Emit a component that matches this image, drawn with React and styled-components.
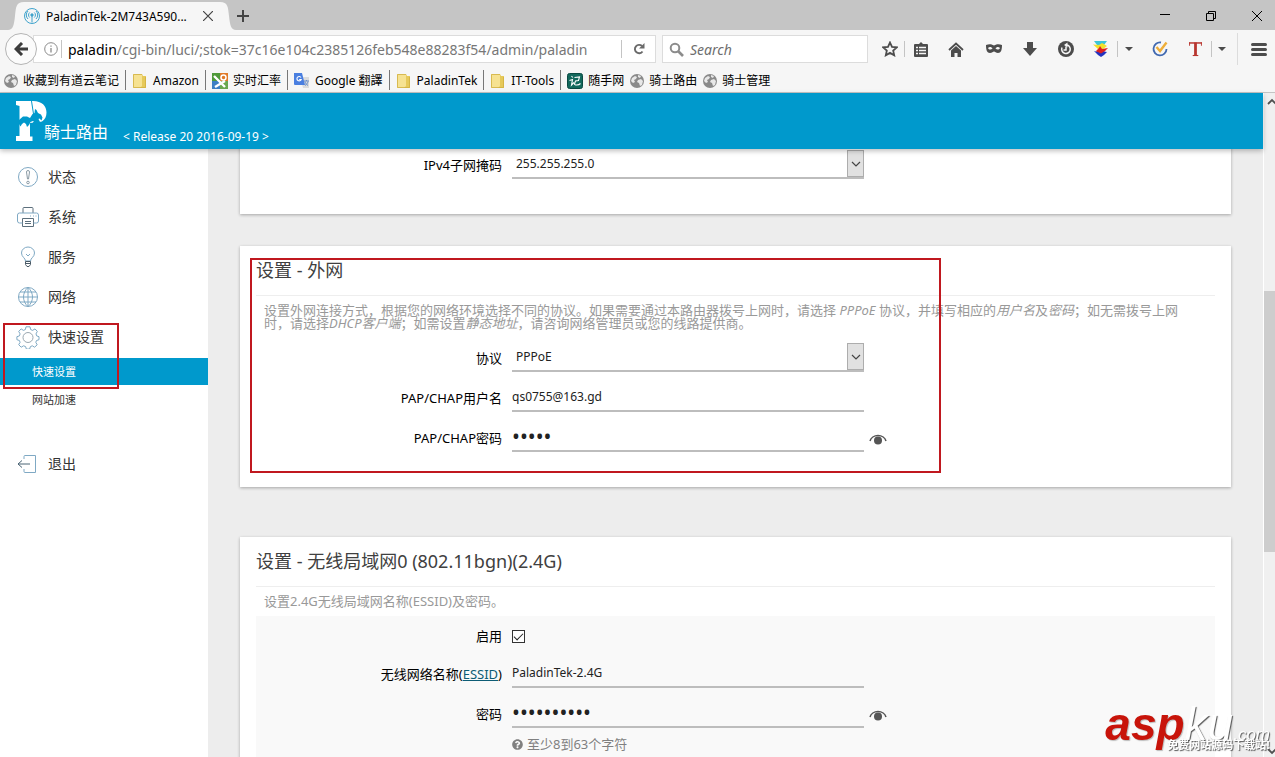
import React, { useState } from 'react';
import styled, { createGlobalStyle } from 'styled-components';
import { FaQuestionCircle } from 'react-icons/fa';

const GlobalStyle = createGlobalStyle`
  :root {
    --accent: #0099cc;
    --page: #ededed;
    --chrome: #f6f6f6;
    --chrome-icon: #4c4c4c;
    --line: #bdbdbd;
    --mark: #c0181f;
  }

  * {
    box-sizing: border-box;
  }

  body {
    margin: 0;
    font-family: 'Noto Sans', 'Noto Sans CJK SC', sans-serif;
    font-size: 13px;
    color: #000;
    background: var(--page);
  }

  button, input, select {
    font: inherit;
    color: inherit;
    margin: 0;
    padding: 0;
    border: 0;
    background: none;
  }
`;

/* ---------- browser ---------- */

const Window = styled.div`
  display: flex;
  flex-direction: column;
  height: 100vh;
  min-width: 900px;
  overflow: hidden;
`;

const TabStrip = styled.div`
  display: flex;
  align-items: flex-end;
  height: 30px;
  padding: 0 4px 0 8px;
  background: #c5c5c5;
`;

const Tab = styled.div`
  display: flex;
  align-items: stretch;
  height: 28px;
`;

const TabEdge = styled.svg`
  display: block;
  width: 16px;
  height: 28px;
  fill: var(--chrome);
`;

const TabBody = styled.div`
  display: flex;
  align-items: center;
  width: 196px;
  background: var(--chrome);
`;

const TabTitle = styled.span`
  flex: 1;
  margin-left: 6px;
  font-size: 12px;
  white-space: nowrap;
`;

const PlainButton = styled.button`
  display: flex;
  align-items: center;
  justify-content: center;
  width: ${(props) => props.$width || 16}px;
  height: ${(props) => props.$height || 28}px;
  color: ${(props) => props.$color || 'var(--chrome-icon)'};

  svg {
    display: block;
    flex: none;
  }
`;

const WindowButtons = styled.div`
  display: flex;
  align-items: center;
  height: 28px;
  gap: 18px;
  margin-left: auto;
`;

const NavBar = styled.div`
  display: flex;
  align-items: center;
  height: 38px;
  padding-left: 5px;
  background: var(--chrome);
`;

const BackButton = styled.button`
  display: flex;
  align-items: center;
  justify-content: center;
  width: 32px;
  height: 32px;
  border: 1px solid #b4b4b4;
  border-radius: 50%;
  background: #fbfbfb;
  z-index: 1;
`;

const UrlBar = styled.div`
  display: flex;
  align-items: center;
  flex: 1;
  min-width: 0;
  height: 28px;
  margin-left: -4px;
  padding-left: 6px;
  border: 1px solid #dcdcdc;
  background: #fff;
  font-size: 14px;
`;

const Divider = styled.span`
  flex: none;
  width: 1px;
  height: ${(props) => props.$height || 18}px;
  margin: 0 ${(props) => props.$space || 0}px;
  background: ${(props) => props.$color || '#c4c4c4'};
`;

const UrlHost = styled.label`
  margin-left: 6px;
`;

const UrlInput = styled.input`
  flex: 1;
  min-width: 0;
  height: 26px;
  margin-right: 26px;
  color: #777;
  outline: none;
`;

const SearchBar = styled.label`
  display: flex;
  align-items: center;
  width: 206px;
  height: 28px;
  margin: 0 7px 0 6px;
  padding-left: 6px;
  gap: 6px;
  border: 1px solid #dcdcdc;
  background: #fff;
`;

const SearchInput = styled.input`
  flex: 1;
  min-width: 0;
  height: 26px;
  font-size: 14px;
  font-style: italic;
  outline: none;

  &::placeholder {
    color: #6e6e6e;
  }
`;

const ToolIcons = styled.div`
  display: flex;
  align-items: center;
`;

const Bookmarks = styled.nav`
  display: flex;
  align-items: center;
  height: 25px;
  padding: 0 4px;
  gap: 6px;
  border-bottom: 1px solid #c4c4c4;
  background: var(--chrome);
`;

const Bookmark = styled.a`
  display: flex;
  align-items: center;
  gap: 5px;
  color: #000;
  font-size: 12px;
  line-height: 20px;
  padding-top: 1px;
  white-space: nowrap;
  text-decoration: none;

  svg {
    display: block;
  }
`;

const Viewport = styled.div`
  display: flex;
  flex: 1;
  min-height: 0;
`;

const ScrollBar = styled.div`
  display: flex;
  flex-direction: column;
  align-items: flex-end;
  width: 12px;
  border-left: 1px solid #fff;
  background: #f0f0f0;
  overflow: hidden;

  svg {
    flex: none;
  }
`;

const ScrollTrack = styled.div`
  flex: 1;
  width: 100%;
  padding-top: 181px;
`;

const ScrollThumb = styled.div`
  height: 261px;
  background: #cdcdcd;
`;

/* ---------- router page ---------- */

const Page = styled.div`
  display: flex;
  flex-direction: column;
  flex: 1;
  min-width: 0;
  background: var(--page);
`;

const Header = styled.header`
  display: flex;
  align-items: flex-end;
  flex: none;
  height: 56px;
  padding: 0 16px 5px;
  background: var(--accent);
  color: #fff;
  box-shadow: 0 2px 5px rgba(0, 0, 0, 0.26);
  z-index: 2;
`;

const Brand = styled.a`
  display: flex;
  align-items: flex-end;
  color: #fff;
  font-size: 16px;
  line-height: 24px;
  text-decoration: none;

  svg {
    margin-bottom: 2px;
  }

  span {
    margin-left: -4px;
  }
`;

const Release = styled.span`
  margin-left: 15px;
  font-size: 12px;
  line-height: 14px;
`;

const Columns = styled.div`
  display: flex;
  flex: 1;
  min-height: 0;
`;

const Sidebar = styled.nav`
  position: relative;
  flex: none;
  width: 208px;
  padding-top: 8px;
  background: #fff;
`;

const MenuItem = styled.a`
  display: flex;
  align-items: center;
  height: 40px;
  padding-left: 16px;
  gap: 8px;
  color: #333;
  font-size: 14px;
  text-decoration: none;

  span {
    padding-bottom: 3px;
  }
`;

const SubMenu = styled.div`
  display: flex;
  flex-direction: column;
  gap: 1px;
  padding: 1px 0 31px;
`;

const SubItem = styled.a`
  padding-left: 32px;
  font-size: 11px;
  line-height: 27px;
  text-decoration: none;
  color: ${(props) => (props.$active ? '#fff' : '#333')};
  background: ${(props) => (props.$active ? 'var(--accent)' : 'none')};
`;

const Main = styled.main`
  flex: 1;
  min-width: 0;
  padding: 0 32px;
  overflow: hidden;
`;

const Card = styled.section`
  position: relative;
  margin-top: ${(props) => props.$gap}px;
  padding: 0 16px 29px;
  background: #fff;
  box-shadow: 0 1px 3px rgba(0, 0, 0, 0.3);
`;

const CardTitle = styled.h3`
  margin: 0;
  border-bottom: 1px solid #eee;
  font-size: 18px;
  font-weight: 400;
  line-height: 49px;
  color: #404040;
`;

const Description = styled.p`
  margin: 0;
  padding: 8px 24px 8px 8px;
  color: #999;
  line-height: 13px;
`;

const Panel = styled.div`
  background: #f9f9f9;
`;

const Row = styled.div`
  display: flex;
  min-height: ${(props) => props.$height || 40}px;
  padding-top: 4px;
`;

const RowLabel = styled.label`
  width: 246px;
  margin-right: 10px;
  text-align: right;
  line-height: 32px;

  a {
    color: #0d5c75;
  }
`;

const Field = styled.div`
  position: relative;
  display: flex;
  flex: 0 1 352px;
  height: 30px;
  border-bottom: 2px solid var(--line);
`;

const TextInput = styled.input`
  width: 100%;
  height: 28px;
  font-size: 12px;
  color: #222;
  outline: none;

  &[type='password'] {
    font-size: 21px;
  }
`;

const Select = styled.select`
  appearance: none;
  width: 100%;
  height: 28px;
  padding: 0 20px 0 4px;
  font-size: 12px;
  color: #222;
  outline: none;
`;

const SelectArrow = styled.span`
  position: absolute;
  top: 1px;
  right: 0;
  display: flex;
  align-items: center;
  justify-content: center;
  width: 17px;
  height: 27px;
  border: 1px solid #adadad;
  background: #e1e1e1;
  pointer-events: none;
`;

const CheckBox = styled.input`
  appearance: none;
  width: 13px;
  height: 13px;
  margin-top: 10px;
  border: 1px solid #333;
  background: #fff;

  &:checked::after {
    content: '';
    display: block;
    width: 8px;
    height: 4px;
    margin: 2px 1px;
    border: solid #222;
    border-width: 0 0 1px 1px;
    transform: rotate(-45deg);
  }
`;

const Hint = styled.p`
  display: flex;
  align-items: center;
  gap: 4px;
  margin: 0;
  padding: 0 0 40px 256px;
  color: #808080;
  line-height: 20px;
`;

/* ---------- overlays ---------- */

const Marker = styled.div`
  position: absolute;
  top: ${(props) => props.$top}px;
  left: ${(props) => props.$left}px;
  width: ${(props) => props.$width}px;
  height: ${(props) => props.$height}px;
  border: 2px solid var(--mark);
  pointer-events: none;
`;

const Watermark = styled.div`
  position: fixed;
  right: 5px;
  bottom: 5px;
  z-index: 3;
  display: flex;
  flex-direction: column;
  align-items: flex-end;
  color: #fff;
  font-family: 'Liberation Sans', 'Noto Sans CJK SC', sans-serif;
  text-shadow: 1px 1px 1px #555;
`;

const WatermarkName = styled.div`
  font-size: 46px;
  font-style: italic;
  line-height: 6px;

  b {
    color: #c8140a;
    text-shadow: 1px 1px 1px #bbb;
  }

  small {
    font-size: 17px;
  }
`;

const WatermarkLine = styled.div`
  font-size: 11px;
  font-weight: 700;
  line-height: 14px;
`;

/* ---------- drawings ---------- */

const Globe = () => (
  <svg width="14" height="14" viewBox="0 0 14 14">
    <circle cx="7" cy="7" r="7" fill="#8a8a8a" />
    <path d="M2 4l3-2 2 1-1 2-2 1 1 2-2 1-2-2zM8 6l3-1 2 2-1 4-2 1-1-3-2-1zM8 1l3 1-1 2-2-1z" fill="#e8e8e8" />
  </svg>
);

const Folder = () => (
  <svg width="16" height="16" viewBox="0 0 16 16">
    <path d="M1 1h9l1 2h3v12H1z" fill="#e6c95a" />
    <path d="M1 1h9v12l-2 2H1z" fill="#f6e292" />
    <path d="M1.500 1.500h8.500M1.500 1.500v13h12V4" fill="none" stroke="#d0b040" strokeWidth="0.800" />
  </svg>
);

const RateIcon = () => (
  <svg width="16" height="16" viewBox="0 0 16 16">
    <path d="M0 0h8v8H0z" fill="#4f9a3a" />
    <path d="M8 0h8v8H8z" fill="#e07a2a" />
    <path d="M0 8h8v8H0z" fill="#3d7fc4" />
    <path d="M8 8h8v8H8z" fill="#6aa84f" />
    <path d="M2 3l11 11M13 8L3 14" stroke="#fff" strokeWidth="2.400" />
    <circle cx="11.500" cy="4.500" r="2.500" fill="none" stroke="#fff" strokeWidth="1.500" />
  </svg>
);

const TranslateIcon = () => (
  <svg width="16" height="16" viewBox="0 0 16 16">
    <path d="M6 4h9v11H9z" fill="#dcdcdc" />
    <path d="M0 0h8l3 12H1a1 1 0 0 1-1-1z" fill="#4a7fe0" />
    <path d="M7 4.500A2.200 2.200 0 1 0 7.200 6.500H5.200" fill="none" stroke="#fff" strokeWidth="1.100" />
    <path d="M10 8h5M12.500 7v1M11 8.500c.500 2 1.500 3 3 4M14 8.500c-.500 2-1.500 3-3 4" fill="none" stroke="#6b8fc9" />
  </svg>
);

const NoteIcon = () => (
  <svg width="16" height="16" viewBox="0 0 16 16">
    <rect x="0.500" y="0.500" width="15" height="15" rx="2" fill="#12685c" stroke="#0a4a42" />
    <path d="M4.500 3l1.200 1.500M2.500 7.500l3-1-1 5.500 2.500-2.500M7.500 4.500l5-.500-1 3.500-3 .500L7.500 11c0 1.500 4 1.500 6-.500" fill="none" stroke="#fff" strokeWidth="1.100" />
  </svg>
);

const TabIcon = () => (
  <svg width="16" height="16" viewBox="0 0 16 16" fill="none" stroke="#3fa3cc">
    <circle cx="8" cy="8" r="7.500" />
    <circle cx="8" cy="7" r="1.200" fill="#3fa3cc" />
    <path d="M8 8v6.500M5.700 9.500a3.300 3.300 0 0 1 0-5M10.300 9.500a3.300 3.300 0 0 0 0-5M4 11a5.500 5.500 0 0 1 0-8M12 11a5.500 5.500 0 0 0 0-8" />
  </svg>
);

const Caret = () => (
  <svg width="8" height="4" viewBox="0 0 8 4">
    <path d="M0 0h8L4 4z" fill="currentColor" />
  </svg>
);

const Chevron = () => (
  <svg width="10" height="6" viewBox="0 0 10 6" fill="none" stroke="#444" strokeWidth="1.200">
    <path d="M1 1l4 4 4-4" />
  </svg>
);

const Eye = () => (
  <svg width="18" height="12" viewBox="0 0 18 12">
    <path d="M1 8a8.200 7 0 0 1 16 0" fill="none" stroke="#555" strokeWidth="1.500" />
    <circle cx="9" cy="7.500" r="4" fill="#555" />
  </svg>
);

const Logo = () => (
  <svg width="32" height="42" viewBox="0 0 32 42">
    <path d="M0 1h17c9 0 13.500 5 13.500 11.500 0 4-1.500 7-4.500 9l-3 .500-9 1v13.500h2.500v4.500H0V36h3.500V6L0 5z" fill="#fff" />
    <path d="M15 1h1l2 13h-1z" fill="#0099cc" />
    <path d="M3 20l4-3.500h4l3 1.500 2.500-4 2-1 .500-4 1.500 1 1.500 3 3 1.500 1.500 3-1 3-2-2-1 .500 1.500 3-3 1-4-2-2.500 1-1.500 3-2 2-1-3-2-1.500-2 1.500-1.500 2.500L3 24z" fill="#0099cc" />
    <path d="M16 24l2-3 3-1 2 3-4 1-3 4z" fill="#0099cc" />
  </svg>
);

const MENU_DRAWINGS = {
  status: (
    <>
      <circle cx="12" cy="12" r="9.500" />
      <path d="M10.500 7a1.500 1.500 0 0 1 3 0l-1 7h-1z" stroke="#8a9aa5" />
      <circle cx="12" cy="17.500" r="1.300" stroke="#8a9aa5" />
    </>
  ),
  system: (
    <>
      <path d="M7 8V3.500a1 1 0 0 1 1-1h8a1 1 0 0 1 1 1V8M6.500 13.500h11v8h-11zM9 16.500h6M9 18.500h6" stroke="#5c6f7c" />
      <path d="M6.500 18H3.500a2 2 0 0 1-2-2v-6a2 2 0 0 1 2-2h17a2 2 0 0 1 2 2v6a2 2 0 0 1-2 2h-3M14 11h1M17 11h1M19.500 11h1" />
    </>
  ),
  services: (
    <>
      <path d="M9.500 16c0-3-4-4-4-8a6.500 6 0 0 1 13 0c0 4-4 5-4 8zM10 9l2 2 2-2" />
      <path d="M9.500 16.500h5v3l-1.500 2h-2l-1.500-2zM9.500 18.500h5" stroke="#4a5a66" />
    </>
  ),
  network: (
    <>
      <circle cx="12" cy="12" r="9.500" />
      <path d="M2.500 12h19M12 2.500v19M4 7h16M4 17h16M12 2.500c-6 5-6 14 0 19M12 2.500c6 5 6 14 0 19" />
    </>
  ),
  quick: (
    <>
      <path d="M10 1.800h4l.600 2.700 2 .900 2.400-1.500 2.300 2.500-1.300 2.500.700 2 2.300.800v3l-2.500.800-.700 1.800 1.400 2.500-2.600 2.400-2.300-1.400-1.900.800-.800 2.500h-3.200l-.800-2.500-2-.800-2.400 1.400-2.500-2.500 1.400-2.400-.700-1.800-2.500-.800v-3l2.500-.800.700-2-1.400-2.500 2.500-2.500L7.400 5.400l2-.900z" />
      <circle cx="12" cy="12.500" r="5" stroke="#9aa7b0" />
    </>
  ),
  logout: (
    <>
      <path d="M8 7V4.500a1 1 0 0 1 1-1h10.500v17H9a1 1 0 0 1-1-1V17" />
      <path d="M2 12h12M6 8.500L2 12l4 3.500" stroke="#4a6475" />
    </>
  ),
};

const MenuIcon = ({ name }) => (
  <svg width="24" height="24" viewBox="0 0 24 24" fill="none" stroke="#7fa9c4">
    {MENU_DRAWINGS[name]}
  </svg>
);

/* ---------- parts ---------- */

const MENU = [
  { id: 'status', label: '状态' },
  { id: 'system', label: '系统' },
  { id: 'services', label: '服务' },
  { id: 'network', label: '网络' },
  { id: 'quick', label: '快速设置' },
];

const SUB_MENU = ['快速设置', '网站加速'];

const BOOKMARKS = [
  { label: '收藏到有道云笔记', icon: <Globe />, divider: true },
  { label: 'Amazon', icon: <Folder />, divider: true },
  { label: '实时汇率', icon: <RateIcon />, divider: true },
  { label: 'Google 翻譯', icon: <TranslateIcon />, divider: true },
  { label: 'PaladinTek', icon: <Folder />, divider: true },
  { label: 'IT-Tools', icon: <Folder />, divider: true },
  { label: '随手网', icon: <NoteIcon /> },
  { label: '骑士路由', icon: <Globe /> },
  { label: '骑士管理', icon: <Globe /> },
];

const SelectRow = ({ id, label, options }) => (
  <Row>
    <RowLabel htmlFor={id}>{label}</RowLabel>
    <Field>
      <Select id={id}>
        {options.map((option) => (
          <option key={option}>{option}</option>
        ))}
      </Select>
      <SelectArrow>
        <Chevron />
      </SelectArrow>
    </Field>
  </Row>
);

const TextRow = ({ id, label, value }) => (
  <Row>
    <RowLabel htmlFor={id}>{label}</RowLabel>
    <Field>
      <TextInput id={id} type="text" defaultValue={value} />
    </Field>
  </Row>
);

const PasswordRow = ({ id, label, value }) => {
  const [visible, setVisible] = useState(false);

  return (
    <Row>
      <RowLabel htmlFor={id}>{label}</RowLabel>
      <Field>
        <TextInput id={id} type={visible ? 'text' : 'password'} defaultValue={value} />
      </Field>
      <PlainButton
        type="button"
        aria-label="显示密码"
        $width={28}
        $height={34}
        onClick={() => setVisible(!visible)}
      >
        <Eye />
      </PlainButton>
    </Row>
  );
};

const BrowserChrome = () => (
  <>
    <TabStrip>
      <Tab>
        <TabEdge viewBox="0 0 16 28">
          <path d="M16 0C8 0 8 5 7 14S5 28 0 28h16z" />
        </TabEdge>
        <TabBody>
          <TabIcon />
          <TabTitle>PaladinTek-2M743A590...</TabTitle>
          <PlainButton aria-label="Close tab" $width={24}>
            <svg width="10" height="10" viewBox="0 0 10 10" stroke="#444" strokeWidth="1.200">
              <path d="M0 0l10 10M10 0L0 10" />
            </svg>
          </PlainButton>
        </TabBody>
        <TabEdge viewBox="0 0 16 28">
          <path d="M0 0c8 0 8 5 9 14s2 14 7 14H0z" />
        </TabEdge>
      </Tab>
      <PlainButton aria-label="New tab" $width={14}>
        <svg width="12" height="12" viewBox="0 0 12 12" stroke="#444" strokeWidth="2">
          <path d="M6 0v12M0 6h12" />
        </svg>
      </PlainButton>
      <WindowButtons>
        <PlainButton aria-label="Minimize" $width={28}>
          <svg width="10" height="10" viewBox="0 0 10 10" stroke="#000">
            <path d="M0 3.500h10" />
          </svg>
        </PlainButton>
        <PlainButton aria-label="Restore" $width={28}>
          <svg width="10" height="10" viewBox="0 0 10 10" fill="none" stroke="#000">
            <path d="M.500 2.500h7v7h-7zM2.500 2.500v-2h7v7h-2" />
          </svg>
        </PlainButton>
        <PlainButton aria-label="Close" $width={28}>
          <svg width="10" height="10" viewBox="0 0 10 10" stroke="#000">
            <path d="M0 0l10 10M10 0L0 10" />
          </svg>
        </PlainButton>
      </WindowButtons>
    </TabStrip>

    <NavBar>
      <BackButton aria-label="Back">
        <svg width="14" height="14" viewBox="0 0 14 14" fill="none" stroke="#3c3c3c" strokeWidth="3">
          <path d="M8 1L2 7l6 6M2.500 7H14" />
        </svg>
      </BackButton>
      <UrlBar>
        <PlainButton aria-label="Site information" $width={21} $color="#8a8a8a">
          <svg width="14" height="14" viewBox="0 0 14 14" fill="none" stroke="currentColor">
            <circle cx="7" cy="7" r="6.300" />
            <path d="M7 6v4.500M7 3.500v1.300" strokeWidth="1.300" />
          </svg>
        </PlainButton>
        <Divider $height={18} />
        <UrlHost htmlFor="url">paladin</UrlHost>
        <UrlInput id="url" type="text" defaultValue="/cgi-bin/luci/;stok=37c16e104c2385126feb548e88283f54/admin/paladin" />
        <Divider $height={18} />
        <PlainButton aria-label="Reload" $width={33} $color="#6a6a6a">
          <svg width="12" height="12" viewBox="0 0 12 12">
            <path d="M9.500 8.500A4.200 4.200 0 1 1 9 3" fill="none" stroke="currentColor" strokeWidth="1.900" />
            <path d="M11.500 0v5.500H6z" fill="currentColor" />
          </svg>
        </PlainButton>
      </UrlBar>
      <SearchBar>
        <svg width="15" height="15" viewBox="0 0 15 15" fill="none" stroke="#8c8c8c" strokeWidth="2">
          <circle cx="6" cy="6" r="4.300" />
          <path d="M9 9l5 5" strokeWidth="2.600" />
        </svg>
        <SearchInput type="text" placeholder="Search" aria-label="Search" />
      </SearchBar>
      <ToolIcons>
        <PlainButton aria-label="Bookmark this page" $width={29}>
          <svg width="16" height="16" viewBox="0 0 16 16" fill="none" stroke="currentColor" strokeWidth="1.800">
            <path d="M8 1.500l2 4.400 4.800.500-3.600 3.200 1 4.700L8 11.900l-4.200 2.400 1-4.700L1.200 6.400l4.800-.500z" />
          </svg>
        </PlainButton>
        <Divider $height={16} />
        <PlainButton aria-label="Bookmarks" $width={31}>
          <svg width="14" height="15" viewBox="0 0 14 15">
            <path d="M1 2h4l2-2 2 2h4a1 1 0 0 1 1 1v11a1 1 0 0 1-1 1H1a1 1 0 0 1-1-1V3a1 1 0 0 1 1-1z" fill="currentColor" />
            <path d="M2 5.500h2M5 5.500h7M2 8.500h2M5 8.500h7M2 11.500h2M5 11.500h7" stroke="#f6f6f6" strokeWidth="1.600" />
          </svg>
        </PlainButton>
        <PlainButton aria-label="Home" $width={40}>
          <svg width="16" height="15" viewBox="0 0 16 15">
            <path d="M1 8l7-6.500L15 8" fill="none" stroke="currentColor" strokeWidth="1.800" />
            <path d="M3 8.500L8 4l5 4.500V15H9.500v-4h-3v4H3z" fill="currentColor" />
          </svg>
        </PlainButton>
        <PlainButton aria-label="Private browsing" $width={36}>
          <svg width="16" height="10" viewBox="0 0 16 10">
            <path d="M0 1c3-1 5-1 8 .500C11 0 13 0 16 1c0 5-1 8-4 8-2 0-3-1.500-4-1.500S6 9 4 9C1 9 0 6 0 1z" fill="currentColor" />
            <path d="M2 4c1.500-1.500 3.500-1 4.500.500C5 6 3 6 2 4zM14 4c-1.500-1.500-3.500-1-4.500.500C11 6 13 6 14 4z" fill="#f6f6f6" />
          </svg>
        </PlainButton>
        <PlainButton aria-label="Downloads" $width={36}>
          <svg width="14" height="14" viewBox="0 0 14 14" fill="currentColor">
            <path d="M4 0h6v6h4l-7 8-7-8h4z" />
          </svg>
        </PlainButton>
        <PlainButton aria-label="History" $width={36}>
          <svg width="16" height="16" viewBox="0 0 16 16">
            <circle cx="8" cy="8" r="8" fill="currentColor" />
            <path d="M4 6.500a4.300 4.300 0 1 0 5-2.500M8 5.500V9H5.500" fill="none" stroke="#f6f6f6" strokeWidth="1.500" />
            <path d="M9.500 1.500v5L6 4z" fill="#f6f6f6" />
          </svg>
        </PlainButton>
        <PlainButton aria-label="Proxy" $width={33}>
          <svg width="16" height="16" viewBox="0 0 16 16">
            <path d="M1 0h13l-3 4H4z" fill="#3cc5d8" />
            <path d="M0 3.500l6 .500 3-2 5 3-4 3H5z" fill="#f2e12a" />
            <path d="M3 10l3-3 1-2 2 3 6-1-3 3-3 3H5z" fill="#e02020" />
            <path d="M1 10l4 1 3 1.500 3-2 3 .500-3 3-3 2-3-2z" fill="#2432c0" />
          </svg>
        </PlainButton>
        <Divider $height={16} />
        <PlainButton aria-label="Proxy options" $width={22}>
          <Caret />
        </PlainButton>
        <PlainButton aria-label="Tasks" $width={40}>
          <svg width="16" height="16" viewBox="0 0 16 16" fill="none">
            <path d="M9 1.500A6.500 6.500 0 1 0 14.500 8" stroke="#4169b0" strokeWidth="1.800" />
            <path d="M4.500 6l3.500 4 6.500-8.500" stroke="#eeae3a" strokeWidth="2.400" />
          </svg>
        </PlainButton>
        <PlainButton aria-label="Text tool" $width={31}>
          <svg width="13" height="16" viewBox="0 0 14 16" fill="none" stroke="#b8352f">
            <path d="M0 1.500h14" strokeWidth="1.600" />
            <path d="M.600 1v3.500M13.400 1v3.500" strokeWidth="1" />
            <path d="M7 1v14" strokeWidth="3" />
            <path d="M4 15h6" strokeWidth="1.200" />
          </svg>
        </PlainButton>
        <Divider $height={16} />
        <PlainButton aria-label="Text tool options" $width={20}>
          <Caret />
        </PlainButton>
        <Divider $height={32} $space={5} $color="#dcdcdc" />
        <PlainButton aria-label="Menu" $width={32}>
          <svg width="16" height="13" viewBox="0 0 16 13" stroke="currentColor" strokeWidth="3" strokeLinecap="round">
            <path d="M1.500 1.500h13M1.500 6.500h13M1.500 11.500h13" />
          </svg>
        </PlainButton>
      </ToolIcons>
    </NavBar>

    <Bookmarks>
      {BOOKMARKS.map(({ label, icon, divider }) => (
        <React.Fragment key={label}>
          <Bookmark href="#">
            {icon}
            {label}
          </Bookmark>
          {divider && <Divider $height={20} $color="#777" />}
        </React.Fragment>
      ))}
    </Bookmarks>
  </>
);

const SideMenu = () => (
  <Sidebar>
    {MENU.map(({ id, label }) => (
      <MenuItem key={id} href={`#${id}`}>
        <MenuIcon name={id} />
        <span>{label}</span>
      </MenuItem>
    ))}
    <SubMenu>
      {SUB_MENU.map((label, index) => (
        <SubItem key={label} href="#quick" $active={index === 0}>
          {label}
        </SubItem>
      ))}
    </SubMenu>
    <MenuItem href="#logout">
      <MenuIcon name="logout" />
      <span>退出</span>
    </MenuItem>
    <Marker $top={174} $left={3} $width={116} $height={66} />
  </Sidebar>
);

const App = () => (
  <Window>
    <GlobalStyle />
    <BrowserChrome />
    <Viewport>
      <Page>
        <Header>
          <Brand href="#">
            <Logo />
            <span>騎士路由</span>
          </Brand>
          <Release>&lt; Release 20 2016-09-19 &gt;</Release>
        </Header>
        <Columns>
          <SideMenu />
          <Main>
            <Card $gap={-4}>
              <SelectRow id="netmask" label="IPv4子网掩码" options={['255.255.255.0', '255.255.0.0', '255.0.0.0']} />
            </Card>

            <Card $gap={32}>
              <CardTitle>设置 - 外网</CardTitle>
              <Description>
                设置外网连接方式，根据您的网络环境选择不同的协议。如果需要通过本路由器拨号上网时，请选择 <em>PPPoE</em>{' '}
                协议，并填写相应的<em>用户名</em>及<em>密码</em>；如无需拨号上网时，请选择<em>DHCP客户端</em>；如需设置
                <em>静态地址</em>，请咨询网络管理员或您的线路提供商。
              </Description>
              <SelectRow id="protocol" label="协议" options={['PPPoE', 'DHCP客户端', '静态地址']} />
              <TextRow id="username" label="PAP/CHAP用户名" value="qs0755@163.gd" />
              <PasswordRow id="password" label="PAP/CHAP密码" value="admin" />
              <Marker $top={12} $left={10} $width={691} $height={215} />
            </Card>

            <Card $gap={50}>
              <CardTitle>设置 - 无线局域网0 (802.11bgn)(2.4G)</CardTitle>
              <Description>设置2.4G无线局域网名称(ESSID)及密码。</Description>
              <Panel>
                <Row $height={38}>
                  <RowLabel htmlFor="enable">启用</RowLabel>
                  <CheckBox id="enable" type="checkbox" defaultChecked />
                </Row>
                <TextRow
                  id="essid"
                  label={
                    <>
                      无线网络名称(<a href="#essid">ESSID</a>)
                    </>
                  }
                  value="PaladinTek-2.4G"
                />
                <PasswordRow id="wifi-password" label="密码" value="paladin123" />
                <Hint>
                  <FaQuestionCircle size={11} />
                  至少8到63个字符
                </Hint>
              </Panel>
            </Card>
          </Main>
        </Columns>
      </Page>
      <ScrollBar>
        <svg width="8" height="17" viewBox="0 0 8 17" fill="none" stroke="#505050" strokeWidth="1.800">
          <path d="M1 11l4-4 4 4" />
        </svg>
        <ScrollTrack>
          <ScrollThumb />
        </ScrollTrack>
        <svg width="8" height="17" viewBox="0 0 8 17" fill="none" stroke="#505050" strokeWidth="1.800">
          <path d="M1 9l4 4 4-4" />
        </svg>
      </ScrollBar>
    </Viewport>
    <Watermark>
      <WatermarkName>
        <b>asp</b>ku<small>.com</small>
      </WatermarkName>
      <WatermarkLine>免费网站源码下载站!</WatermarkLine>
    </Watermark>
  </Window>
);

export default App;
